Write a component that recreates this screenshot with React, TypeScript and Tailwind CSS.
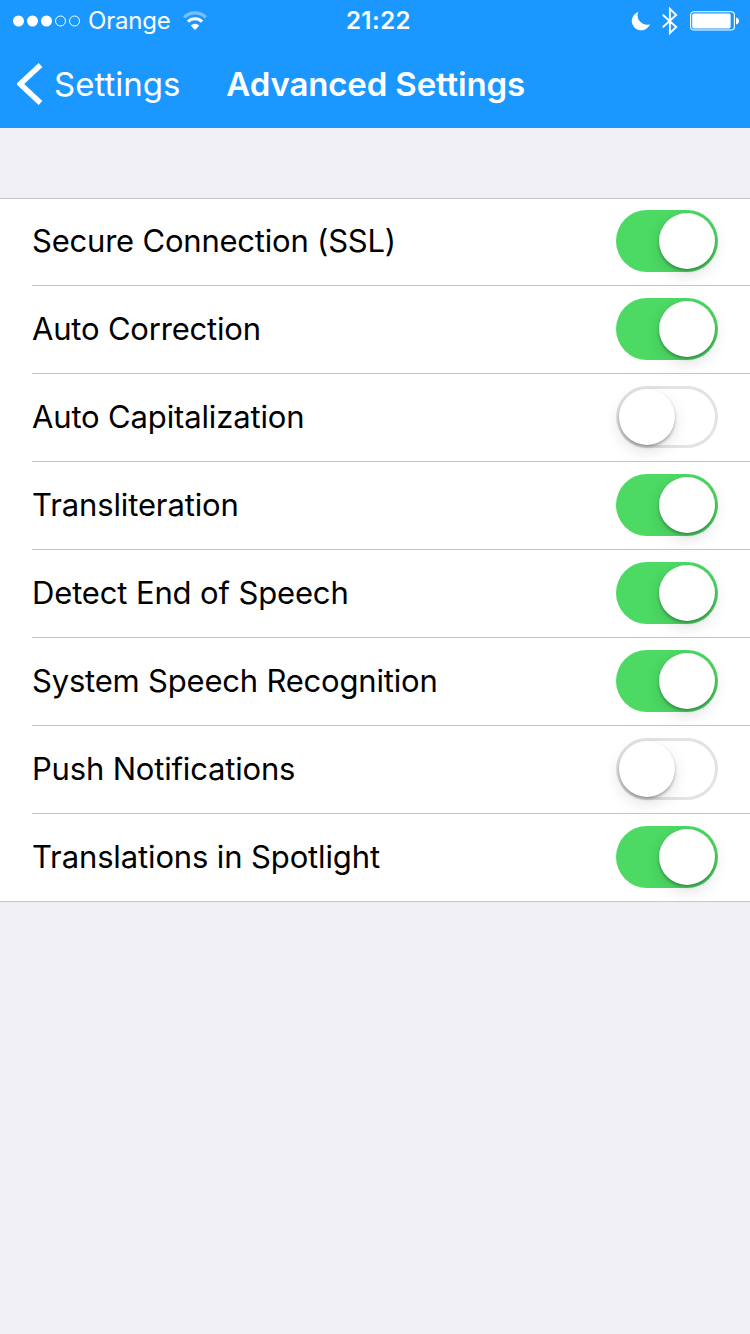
import React, { useState } from "react";
import clsx from "clsx";

interface Setting {
  label: string;
  enabled: boolean;
  tracking: string;
}

const initialSettings: Setting[] = [
  { label: "Secure Connection (SSL)", enabled: true, tracking: "tracking-[-0.21px]" },
  { label: "Auto Correction", enabled: true, tracking: "tracking-[-0.19px]" },
  { label: "Auto Capitalization", enabled: false, tracking: "tracking-[-0.15px]" },
  { label: "Transliteration", enabled: true, tracking: "tracking-[-0.12px]" },
  { label: "Detect End of Speech", enabled: true, tracking: "tracking-[-0.14px]" },
  { label: "System Speech Recognition", enabled: true, tracking: "tracking-[-0.2px]" },
  { label: "Push Notifications", enabled: false, tracking: "tracking-[-0.18px]" },
  { label: "Translations in Spotlight", enabled: true, tracking: "tracking-[-0.13px]" },
];

const SignalDots = () => (
  <svg className="ml-3 shrink-0" width="69" height="14" viewBox="0 0 69 14" fill="none">
    <circle cx="6.5" cy="7" r="5.5" fill="white" />
    <circle cx="20.5" cy="7" r="5.5" fill="white" />
    <circle cx="34.5" cy="7" r="5.5" fill="white" />
    <circle cx="48.5" cy="7" r="5" stroke="white" />
    <circle cx="62.5" cy="7" r="5" stroke="white" />
  </svg>
);

const WifiIcon = () => (
  <svg className="shrink-0" width="26" height="20" viewBox="0 0 26 20" fill="none">
    <path d="M2.2 6.4a15.3 15.3 0 0 1 21.6 0" stroke="white" strokeOpacity="0.4" strokeWidth="3.2" />
    <path d="M5.9 10.7a10 10 0 0 1 14.2 0" stroke="white" strokeWidth="3.2" />
    <path d="M13 19 8.7 14.6a6.1 6.1 0 0 1 8.6 0Z" fill="white" />
  </svg>
);

const MoonIcon = () => (
  <svg className="shrink-0" width="20" height="20" viewBox="0 0 20 20">
    <path d="M7.3 1A9.4 9.4 0 1 0 19 13.2 9.3 9.3 0 0 1 7.3 1Z" fill="white" />
  </svg>
);

const BluetoothIcon = () => (
  <svg className="shrink-0" width="18" height="28" viewBox="0 0 18 28" fill="none">
    <path d="M1.8 7.8 15.2 20 8.9 26.1V1.9L15.2 8 1.8 20.2" stroke="white" strokeWidth="1.9" />
  </svg>
);

const BatteryIcon = () => (
  <svg className="shrink-0" width="50" height="20" viewBox="0 0 50 20" fill="none">
    <rect x="0.6" y="0.8" width="43.8" height="18.2" rx="3.2" stroke="white" strokeWidth="1.1" />
    <rect x="2.2" y="2.4" width="38.4" height="15" rx="1.6" fill="white" />
    <path d="M46 6.5c4 .8 4 6.2 0 7Z" fill="white" />
  </svg>
);

const StatusBar = () => (
  <div className="grid h-10 grid-cols-[1fr_auto_1fr] items-center">
    <div className="flex items-center">
      <SignalDots />
      <span className="ml-[7px] mr-[11px] text-[24px] leading-[41px] tracking-[-0.2px]">Orange</span>
      <WifiIcon />
    </div>
    <span className="pl-[7px] text-[24px] font-semibold leading-[41px] tracking-[0.5px]">21:22</span>
    <div className="flex items-center justify-end pr-2.5">
      <MoonIcon />
      <span className="ml-2.5 mr-[11px] flex">
        <BluetoothIcon />
      </span>
      <BatteryIcon />
    </div>
  </div>
);

interface ToggleProps {
  label: string;
  checked: boolean;
  onChange: () => void;
}

const Toggle: React.FC<ToggleProps> = ({ label, checked, onChange }) => (
  <button
    role="switch"
    aria-checked={checked}
    aria-label={label}
    onClick={onChange}
    className={clsx(
      "flex h-[62px] w-[102px] shrink-0 items-center rounded-full px-[3px]",
      checked ? "justify-end bg-[#4cd964]" : "justify-start bg-white shadow-[inset_0_0_0_3px_#e3e3e3]"
    )}
  >
    <span className="size-14 rounded-full bg-white shadow-[0_6px_16px_rgba(0,0,0,0.12),0_2px_3px_rgba(0,0,0,0.3)]" />
  </button>
);

export default function App() {
  const [settings, setSettings] = useState(initialSettings);

  const toggle = (label: string) => {
    setSettings(settings.map(s => (s.label === label ? { ...s, enabled: !s.enabled } : s)));
  };

  return (
    <div className="min-h-screen w-full bg-[#efeff4] font-[Inter,'Liberation_Sans',sans-serif]">
      <header className="h-32 bg-[#1b98ff] text-white">
        <StatusBar />
        <div className="flex h-[88px] items-center pl-[17px]">
          <button className="flex items-center">
            <svg width="26" height="42" viewBox="0 0 26 42" fill="none">
              <path d="M23.5 2 3.2 21l20.3 19" stroke="white" strokeWidth="5.5" />
            </svg>
            <span className="ml-[11px] text-[33px] leading-[42px]">Settings</span>
          </button>
          <h1 className="ml-[46px] text-[33px] font-semibold leading-[42px] tracking-[-0.14px]">Advanced Settings</h1>
        </div>
      </header>

      <main className="pt-[70px]">
        <ul className="border-y border-[#c8c7cc] bg-white">
          {settings.map(s => (
            <li key={s.label} className="group flex h-[88px] pl-8 first:-mt-px last:h-[87px]">
              <div className="flex flex-1 items-start justify-between border-b border-[#c8c7cc] pr-8 pt-3 group-last:border-b-0">
                <span className={clsx("text-[31px] leading-[62px] text-black", s.tracking)}>{s.label}</span>
                <Toggle label={s.label} checked={s.enabled} onChange={() => toggle(s.label)} />
              </div>
            </li>
          ))}
        </ul>
      </main>
    </div>
  );
}
